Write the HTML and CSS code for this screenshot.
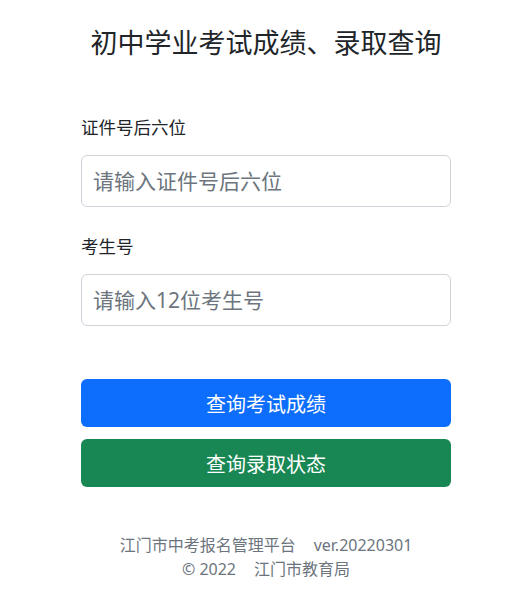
FILE: index.html
```html
<!DOCTYPE html>
<html lang="zh-CN">
	<head>
		<meta charset="UTF-8" />
		<meta name="viewport" content="width=device-width, initial-scale=1.0" />
		<title>初中学业考试成绩、录取查询</title>
		<link rel="stylesheet" href="styles.css">
	</head>
	<body>
		<div class="wrap">
			<h3 class="title">初中学业考试成绩、录取查询</h3>
			<form class="query_form" onsubmit="return false;">
				<div class="field">
					<label for="idno">证件号后六位</label>
					<input type="text" id="idno" placeholder="请输入证件号后六位" />
				</div>
				<div class="field">
					<label for="examno">考生号</label>
					<input type="text" id="examno" placeholder="请输入12位考生号" />
				</div>
				<div class="btns">
					<button class="btn btn_blue">查询考试成绩</button>
					<button class="btn btn_green">查询录取状态</button>
				</div>
			</form>
			<div class="footer">
				<p>江门市中考报名管理平台<span class="sp"></span>ver.20220301</p>
				<p>© 2022<span class="sp"></span>江门市教育局</p>
			</div>
		</div>
	</body>
</html>
```

FILE: styles.css
```css
* {
	margin: 0;
	padding: 0;
	box-sizing: border-box;
}
body {
	font-family: "Noto Sans", "Noto Sans CJK SC", sans-serif;
	color: #212529;
	background: #fff;
}

.wrap {
	width: 370px;
	margin-left: 81px;
	padding-top: 25px;
}

.title {
	font-size: 27px;
	font-weight: 400;
	line-height: 36px;
	text-align: center;
}

.query_form {
	margin-top: 54px;
}

.field {
	margin-bottom: 27px;
}

.field label {
	display: block;
	font-size: 17.5px;
	line-height: 24px;
	margin-bottom: 16px;
}

.field input {
	display: block;
	width: 100%;
	height: 52px;
	padding: 0 11px;
	font-family: inherit;
	font-size: 21px;
	color: #212529;
	border: 1px solid #ced4da;
	border-radius: 6px;
	outline: none;
}

.field input::placeholder {
	color: #6c757d;
}

.btns {
	padding-top: 26px;
}

.btn {
	display: block;
	width: 100%;
	height: 48px;
	margin-bottom: 12px;
	border: none;
	border-radius: 6px;
	color: #fff;
	font-family: inherit;
	font-size: 20px;
	cursor: pointer;
}

.btn_blue {
	background: #0d6efd;
}

.btn_green {
	background: #198754;
}

.footer {
	margin-top: 46px;
	text-align: center;
	color: #6c757d;
	font-size: 16px;
	line-height: 24px;
}

.footer .sp {
	display: inline-block;
	width: 18px;
}
```
